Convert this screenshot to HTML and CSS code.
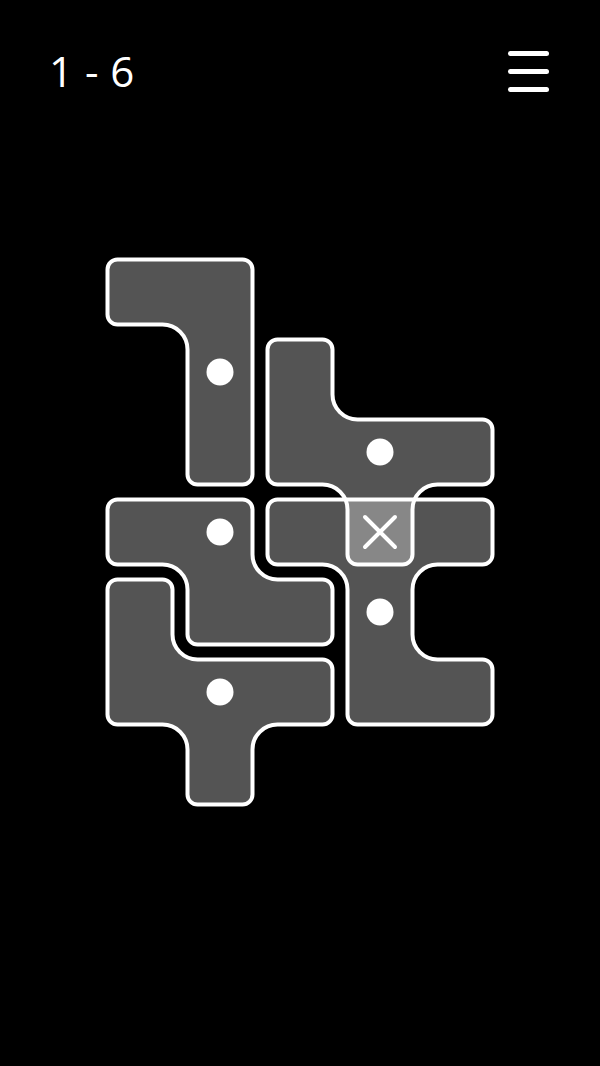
FILE: index.html
```html
<!DOCTYPE html>
<html>
<head>
    <title>Level 1 - 6</title>
    <link rel="stylesheet" href="styles.css">
</head>
<body>
    <div class="topbar">
        <div class="level">1 - 6</div>
        <button class="menu-button" aria-label="Menu">
            <span></span>
            <span></span>
            <span></span>
        </button>
    </div>

    <!-- Board: 5 x 7 cells of 80px, pieces inset 7.5px -->
    <div class="board">
        <svg width="400" height="560" viewBox="0 0 400 560">
            <g class="piece-fill">
                <path d="M 17.5 7.5 H 142.5 A 10 10 0 0 1 152.5 17.5 V 222.5 A 10 10 0 0 1 142.5 232.5 H 97.5 A 10 10 0 0 1 87.5 222.5 V 97.5 A 25 25 0 0 0 62.5 72.5 H 17.5 A 10 10 0 0 1 7.5 62.5 V 17.5 A 10 10 0 0 1 17.5 7.5 Z"/>
                <path d="M 177.5 87.5 H 222.5 A 10 10 0 0 1 232.5 97.5 V 142.5 A 25 25 0 0 0 257.5 167.5 H 382.5 A 10 10 0 0 1 392.5 177.5 V 222.5 A 10 10 0 0 1 382.5 232.5 H 337.5 A 25 25 0 0 0 312.5 257.5 V 302.5 A 10 10 0 0 1 302.5 312.5 H 257.5 A 10 10 0 0 1 247.5 302.5 V 257.5 A 25 25 0 0 0 222.5 232.5 H 177.5 A 10 10 0 0 1 167.5 222.5 V 97.5 A 10 10 0 0 1 177.5 87.5 Z"/>
                <path d="M 17.5 247.5 H 142.5 A 10 10 0 0 1 152.5 257.5 V 302.5 A 25 25 0 0 0 177.5 327.5 H 222.5 A 10 10 0 0 1 232.5 337.5 V 382.5 A 10 10 0 0 1 222.5 392.5 H 97.5 A 10 10 0 0 1 87.5 382.5 V 337.5 A 25 25 0 0 0 62.5 312.5 H 17.5 A 10 10 0 0 1 7.5 302.5 V 257.5 A 10 10 0 0 1 17.5 247.5 Z"/>
                <path d="M 17.5 327.5 H 62.5 A 10 10 0 0 1 72.5 337.5 V 382.5 A 25 25 0 0 0 97.5 407.5 H 222.5 A 10 10 0 0 1 232.5 417.5 V 462.5 A 10 10 0 0 1 222.5 472.5 H 177.5 A 25 25 0 0 0 152.5 497.5 V 542.5 A 10 10 0 0 1 142.5 552.5 H 97.5 A 10 10 0 0 1 87.5 542.5 V 497.5 A 25 25 0 0 0 62.5 472.5 H 17.5 A 10 10 0 0 1 7.5 462.5 V 337.5 A 10 10 0 0 1 17.5 327.5 Z"/>
                <path d="M 177.5 247.5 H 382.5 A 10 10 0 0 1 392.5 257.5 V 302.5 A 10 10 0 0 1 382.5 312.5 H 337.5 A 25 25 0 0 0 312.5 337.5 V 382.5 A 25 25 0 0 0 337.5 407.5 H 382.5 A 10 10 0 0 1 392.5 417.5 V 462.5 A 10 10 0 0 1 382.5 472.5 H 257.5 A 10 10 0 0 1 247.5 462.5 V 337.5 A 25 25 0 0 0 222.5 312.5 H 177.5 A 10 10 0 0 1 167.5 302.5 V 257.5 A 10 10 0 0 1 177.5 247.5 Z"/>
            </g>

            <!-- cell where two pieces overlap -->
            <path class="overlap" d="M 247.5 247.5 H 312.5 V 302.5 A 10 10 0 0 1 302.5 312.5 H 257.5 A 10 10 0 0 1 247.5 302.5 Z"/>

            <g class="piece-line">
                <path d="M 17.5 7.5 H 142.5 A 10 10 0 0 1 152.5 17.5 V 222.5 A 10 10 0 0 1 142.5 232.5 H 97.5 A 10 10 0 0 1 87.5 222.5 V 97.5 A 25 25 0 0 0 62.5 72.5 H 17.5 A 10 10 0 0 1 7.5 62.5 V 17.5 A 10 10 0 0 1 17.5 7.5 Z"/>
                <path d="M 177.5 87.5 H 222.5 A 10 10 0 0 1 232.5 97.5 V 142.5 A 25 25 0 0 0 257.5 167.5 H 382.5 A 10 10 0 0 1 392.5 177.5 V 222.5 A 10 10 0 0 1 382.5 232.5 H 337.5 A 25 25 0 0 0 312.5 257.5 V 302.5 A 10 10 0 0 1 302.5 312.5 H 257.5 A 10 10 0 0 1 247.5 302.5 V 257.5 A 25 25 0 0 0 222.5 232.5 H 177.5 A 10 10 0 0 1 167.5 222.5 V 97.5 A 10 10 0 0 1 177.5 87.5 Z"/>
                <path d="M 17.5 247.5 H 142.5 A 10 10 0 0 1 152.5 257.5 V 302.5 A 25 25 0 0 0 177.5 327.5 H 222.5 A 10 10 0 0 1 232.5 337.5 V 382.5 A 10 10 0 0 1 222.5 392.5 H 97.5 A 10 10 0 0 1 87.5 382.5 V 337.5 A 25 25 0 0 0 62.5 312.5 H 17.5 A 10 10 0 0 1 7.5 302.5 V 257.5 A 10 10 0 0 1 17.5 247.5 Z"/>
                <path d="M 17.5 327.5 H 62.5 A 10 10 0 0 1 72.5 337.5 V 382.5 A 25 25 0 0 0 97.5 407.5 H 222.5 A 10 10 0 0 1 232.5 417.5 V 462.5 A 10 10 0 0 1 222.5 472.5 H 177.5 A 25 25 0 0 0 152.5 497.5 V 542.5 A 10 10 0 0 1 142.5 552.5 H 97.5 A 10 10 0 0 1 87.5 542.5 V 497.5 A 25 25 0 0 0 62.5 472.5 H 17.5 A 10 10 0 0 1 7.5 462.5 V 337.5 A 10 10 0 0 1 17.5 327.5 Z"/>
                <path d="M 177.5 247.5 H 382.5 A 10 10 0 0 1 392.5 257.5 V 302.5 A 10 10 0 0 1 382.5 312.5 H 337.5 A 25 25 0 0 0 312.5 337.5 V 382.5 A 25 25 0 0 0 337.5 407.5 H 382.5 A 10 10 0 0 1 392.5 417.5 V 462.5 A 10 10 0 0 1 382.5 472.5 H 257.5 A 10 10 0 0 1 247.5 462.5 V 337.5 A 25 25 0 0 0 222.5 312.5 H 177.5 A 10 10 0 0 1 167.5 302.5 V 257.5 A 10 10 0 0 1 177.5 247.5 Z"/>
            </g>

            <g class="pin">
                <circle cx="120" cy="120" r="13.5"/>
                <circle cx="280" cy="200" r="13.5"/>
                <circle cx="120" cy="280" r="13.5"/>
                <circle cx="280" cy="360" r="13.5"/>
                <circle cx="120" cy="440" r="13.5"/>
            </g>

            <path class="cross" d="M 265 265 L 295 295 M 295 265 L 265 295"/>
        </svg>
    </div>
</body>
</html>
```

FILE: styles.css
```css
body, html {
    margin: 0;
    height: 100%;
    background: #000;
    color: #fff;
    font-family: 'Open Sans', sans-serif;
}

.topbar {
    display: flex;
    justify-content: space-between;
    align-items: center;
    height: 46px;
    padding: 48px 51px 0 49px;
}

.level {
    font-size: 42px;
    font-weight: 400;
    line-height: 46px;
    letter-spacing: 0.5px;
    white-space: pre;
}

.menu-button {
    display: flex;
    flex-direction: column;
    gap: 13px;
    width: 41px;
    padding: 0;
    border: none;
    background: none;
    cursor: pointer;
}

.menu-button span {
    display: block;
    width: 41px;
    height: 5px;
    border-radius: 3px;
    background: #fff;
}

.board {
    width: 400px;
    margin: 158px auto 0;
}

.board svg {
    display: block;
    overflow: visible;
}

.piece-fill path {
    fill: #545454;
}

.overlap {
    fill: #878787;
}

.piece-line path {
    fill: none;
    stroke: #fff;
    stroke-width: 4;
}

.pin circle {
    fill: #fff;
}

.cross {
    stroke: #fff;
    stroke-width: 4;
    stroke-linecap: round;
}
```
